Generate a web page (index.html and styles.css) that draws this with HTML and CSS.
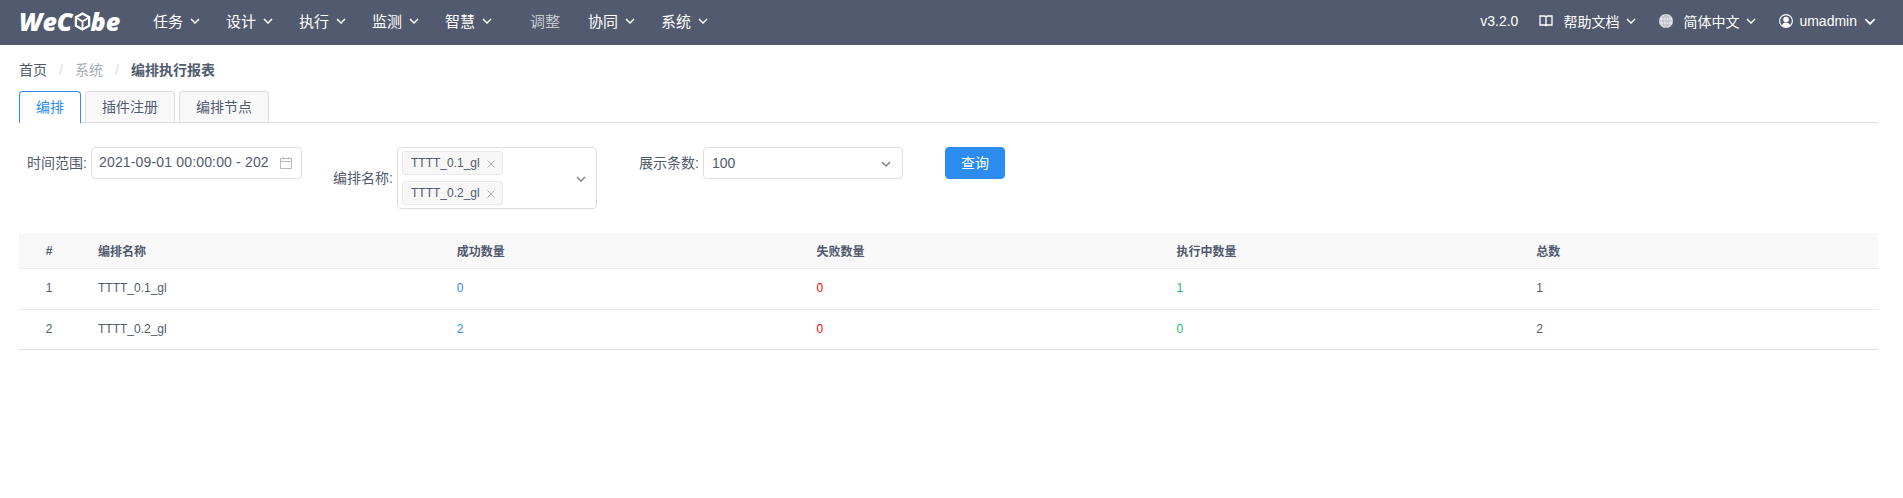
FILE: index.html
```html
<!DOCTYPE html>
<html lang="zh-CN">
  <head>
    <meta charset="UTF-8" />
    <meta name="viewport" content="width=device-width, initial-scale=1.0" />
    <title>编排执行报表</title>
    <link rel="stylesheet" href="styles.css">
  </head>
  <body>
    <svg class="defs" width="0" height="0">
      <symbol id="chev" viewBox="0 0 10 6">
        <path d="M1 1l4 4 4-4" fill="none" stroke="currentColor" stroke-width="1.5" />
      </symbol>
    </svg>

    <header class="topbar">
      <div class="logo">
        <span>WeC</span>
        <svg class="logo-cube" viewBox="0 0 18 20">
          <path d="M9 1.500l7 4v9l-7 4-7-4v-9z" fill="none" stroke="#fff" stroke-width="2.400" />
          <path d="M2.500 6L9 10l6.500-4M9 10v8" fill="none" stroke="#fff" stroke-width="2" />
        </svg>
        <span>be</span>
      </div>
      <nav class="nav">
        <a class="nav-item">任务 <svg class="chev"><use href="#chev" /></svg></a>
        <a class="nav-item">设计 <svg class="chev"><use href="#chev" /></svg></a>
        <a class="nav-item">执行 <svg class="chev"><use href="#chev" /></svg></a>
        <a class="nav-item">监测 <svg class="chev"><use href="#chev" /></svg></a>
        <a class="nav-item">智慧 <svg class="chev"><use href="#chev" /></svg></a>
        <a class="nav-item nav-disabled">调整</a>
        <a class="nav-item">协同 <svg class="chev"><use href="#chev" /></svg></a>
        <a class="nav-item">系统 <svg class="chev"><use href="#chev" /></svg></a>
      </nav>
      <div class="topbar-right">
        <span class="version">v3.2.0</span>
        <a class="top-link">
          <svg class="top-icon" viewBox="0 0 14 14">
            <path d="M1 2h4.500c.8 0 1.500.5 1.500 1.300v9c0-.7-.7-1.300-1.500-1.300H1zM13 2H8.500C7.700 2 7 2.500 7 3.300v9c0-.7.7-1.300 1.500-1.300H13z" fill="none" stroke="#fff" stroke-width="1.300" />
          </svg>
          <span class="top-text">帮助文档</span>
          <svg class="chev"><use href="#chev" /></svg>
        </a>
        <a class="top-link">
          <svg class="top-icon" viewBox="0 0 14 14">
            <circle cx="7" cy="7" r="7" fill="#e4e6ea" />
            <path d="M0 7h14M7 0v14M2 3h10M2 11h10M7 0C3 3 3 11 7 14M7 0c4 3 4 11 0 14" fill="none" stroke="#a9aebb" stroke-width=".7" />
          </svg>
          <span class="top-text">简体中文</span>
          <svg class="chev"><use href="#chev" /></svg>
        </a>
        <a class="top-link">
          <svg class="top-icon" viewBox="0 0 14 14">
            <circle cx="7" cy="7" r="6.400" fill="none" stroke="#fff" stroke-width="1.100" />
            <circle cx="7" cy="5.500" r="2.800" fill="#fff" />
            <path d="M2.800 11.600C3.500 9.200 5 8.500 7 8.500s3.500.7 4.200 3.100C10 12.800 8.500 13.200 7 13.200s-3-.4-4.200-1.600z" fill="#fff" />
          </svg>
          <span class="top-text user-name">umadmin</span>
          <svg class="chev chev-big"><use href="#chev" /></svg>
        </a>
      </div>
    </header>

    <main class="page">
      <div class="breadcrumb">
        <span>首页</span>
        <i class="crumb-sep">/</i>
        <span class="crumb-muted">系统</span>
        <i class="crumb-sep">/</i>
        <strong>编排执行报表</strong>
      </div>

      <div class="tabs">
        <div class="tab tab-active">编排</div>
        <div class="tab">插件注册</div>
        <div class="tab">编排节点</div>
      </div>

      <!-- Filters -->
      <form class="filters">
        <div class="field field-date">
          <label>时间范围:</label>
          <div class="control date-control">
            <span class="date-value">2021-09-01 00:00:00 - 202</span>
            <svg class="calendar" viewBox="0 0 14 14">
              <path d="M1.500 2.500h11v10h-11zM1.500 5.500h11M4 1v2.500M10 1v2.500" fill="none" stroke="#b5b9c2" stroke-width="1" />
            </svg>
          </div>
        </div>

        <div class="field field-name">
          <label>编排名称:</label>
          <div class="control multi-control">
            <div class="tag-list">
              <span class="tag">TTTT_0.1_gl <svg class="tag-x" viewBox="0 0 8 8"><path d="M.5.500l7 7M7.500.500l-7 7" stroke="#a3a6ad" stroke-width=".9" /></svg></span>
              <span class="tag">TTTT_0.2_gl <svg class="tag-x" viewBox="0 0 8 8"><path d="M.5.500l7 7M7.500.500l-7 7" stroke="#a3a6ad" stroke-width=".9" /></svg></span>
            </div>
            <svg class="chev select-arrow"><use href="#chev" /></svg>
          </div>
        </div>

        <div class="field field-count">
          <label>展示条数:</label>
          <div class="control count-control">
            <span>100</span>
            <svg class="chev select-arrow"><use href="#chev" /></svg>
          </div>
        </div>

        <button class="query-btn" type="button">查询</button>
      </form>

      <table class="report">
        <thead>
          <tr>
            <th class="col-index">#</th>
            <th class="col-name">编排名称</th>
            <th>成功数量</th>
            <th>失败数量</th>
            <th>执行中数量</th>
            <th>总数</th>
          </tr>
        </thead>
        <tbody>
          <tr>
            <td class="col-index">1</td>
            <td class="col-name">TTTT_0.1_gl</td>
            <td class="num-blue">0</td>
            <td class="num-red">0</td>
            <td class="num-green">1</td>
            <td>1</td>
          </tr>
          <tr>
            <td class="col-index">2</td>
            <td class="col-name">TTTT_0.2_gl</td>
            <td class="num-blue">2</td>
            <td class="num-red">0</td>
            <td class="num-green">0</td>
            <td>2</td>
          </tr>
        </tbody>
      </table>
    </main>
  </body>
</html>
```

FILE: styles.css
```css
* {
  box-sizing: border-box;
}
body {
  margin: 0;
  font-family: "Liberation Sans", "Noto Sans CJK SC", sans-serif;
  font-size: 14px;
  color: #515a6e;
  background: #fff;
}
.defs {
  position: absolute;
}
.topbar {
  display: flex;
  align-items: center;
  height: 45px;
  padding: 0 27px 4px 19px;
  background: #515a6e;
  color: #fff;
}
.logo {
  display: flex;
  align-items: center;
  width: 134px;
  font-family: "Open Sans", sans-serif;
  font-size: 25px;
  font-weight: 800;
  font-style: italic;
  color: #fff;
}
.logo-cube {
  width: 17px;
  height: 19px;
  margin: 1px 0 0 1px;
}
.nav {
  display: flex;
  align-items: center;
  gap: 26px;
  font-size: 15px;
}
.nav-item {
  display: flex;
  align-items: center;
  gap: 7px;
}
.nav-disabled {
  margin: 0 2px 0 12px;
  color: #c5c8ce;
}
.chev {
  width: 10px;
  height: 6px;
  margin-top: 1px;
}
.chev-big {
  width: 12px;
  height: 7px;
}
.topbar-right {
  display: flex;
  align-items: center;
  gap: 23px;
  margin-left: auto;
}
.version {
  margin-right: -2px;
}
.top-link {
  display: flex;
  align-items: center;
}
.top-icon {
  width: 14px;
  height: 14px;
}
.top-text {
  margin: 0 7px 0 10px;
}
.user-name {
  margin: 0 7px 0 6px;
}
.page {
  padding: 15px 25px 0 19px;
}
.breadcrumb {
  display: flex;
  align-items: center;
  height: 20px;
  line-height: 20px;
}
.breadcrumb strong {
  font-weight: 700;
}
.crumb-sep {
  width: 28px;
  font-style: normal;
  text-align: center;
  color: #dcdee2;
}
.crumb-muted {
  color: #a8abb2;
}
.tabs {
  display: flex;
  gap: 4px;
  height: 32px;
  margin-top: 11px;
  border-bottom: 1px solid #dcdee2;
}
.tab {
  height: 31px;
  padding: 0 16px;
  line-height: 30px;
  background: #f8f8f9;
  border: 1px solid #dcdee2;
  border-bottom: 0;
  border-radius: 4px 4px 0 0;
}
.tab-active {
  height: 32px;
  background: #fff;
  border-color: #2d8cf0;
  color: #2d8cf0;
}
.filters {
  display: flex;
  align-items: flex-start;
  height: 62px;
  margin-top: 24px;
  padding-left: 8px;
}
.field {
  display: flex;
  align-items: center;
}
.field label {
  width: 64px;
  padding-bottom: 2px;
}
.field-name {
  margin-left: 31px;
}
.field-count {
  margin-left: 42px;
}
.control {
  display: flex;
  align-items: center;
  background: #fff;
  border: 1px solid #dcdee2;
  border-radius: 4px;
}
.date-control {
  justify-content: space-between;
  width: 211px;
  height: 32px;
  padding: 0 8px 0 7px;
}
.date-value {
  padding-bottom: 2px;
  letter-spacing: 0.16px;
  white-space: nowrap;
}
.calendar {
  width: 14px;
  height: 14px;
}
.multi-control {
  justify-content: space-between;
  width: 200px;
  height: 62px;
  padding: 0 10px 0 4px;
}
.tag-list {
  display: flex;
  flex-direction: column;
  align-items: flex-start;
  gap: 6px;
}
.tag {
  display: flex;
  align-items: center;
  gap: 7px;
  height: 24px;
  padding: 0 7px 0 8px;
  font-size: 12px;
  background: #f7f7f7;
  border: 1px solid #e8eaec;
  border-radius: 3px;
}
.tag-x {
  width: 8px;
  height: 8px;
  margin-top: 1px;
}
.select-arrow {
  color: #808695;
}
.count-control {
  justify-content: space-between;
  width: 200px;
  height: 32px;
  padding: 0 11px 0 8px;
}
.query-btn {
  width: 60px;
  height: 32px;
  margin-left: 42px;
  padding: 0 0 2px;
  font: inherit;
  color: #fff;
  background: #2d8cf0;
  border: 1px solid #2d8cf0;
  border-radius: 4px;
}
.report {
  width: 100%;
  margin-top: 24px;
  font-size: 12px;
  table-layout: fixed;
  border-collapse: separate;
  border-spacing: 0;
}
.report th,
.report td {
  padding: 0 18px;
  text-align: left;
  border-bottom: 1px solid #e8eaec;
}
.report th {
  height: 36px;
  font-weight: 700;
  background: #f8f8f9;
}
.report td {
  height: 41px;
  padding-bottom: 2px;
}
.report tbody tr:last-child td {
  height: 40px;
  border-bottom-color: #dcdee2;
}
.report .col-index {
  width: 60px;
  padding-left: 0;
  padding-right: 0;
  text-align: center;
}
.report .col-name {
  padding-left: 19px;
}
.num-blue {
  color: #2d8cf0;
}
.num-red {
  color: #ff0000;
}
.num-green {
  color: #19be6b;
}
```
